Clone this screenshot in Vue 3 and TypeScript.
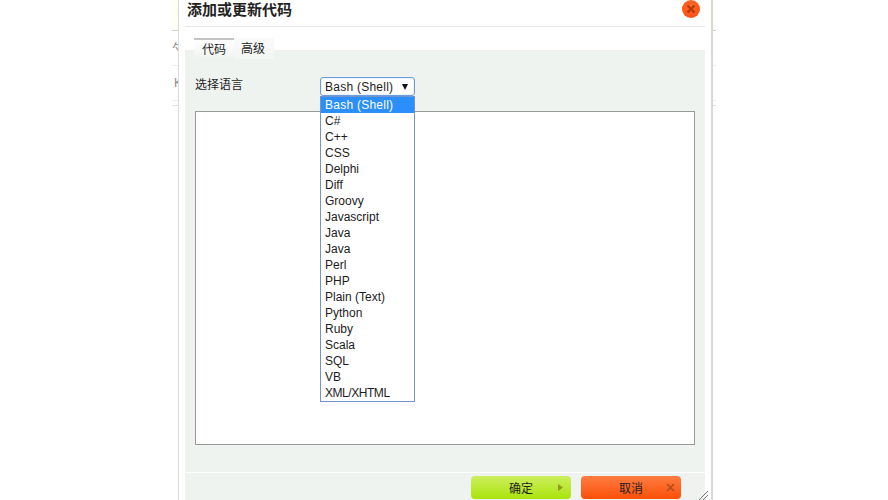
<script setup lang="ts">
const languages: string[] = ['Bash (Shell)','C#','C++','CSS','Delphi','Diff','Groovy','Javascript','Java','Java','Perl','PHP','Plain (Text)','Python','Ruby','Scala','SQL','VB','XML/XHTML']
</script>

<template>
  <div class="page">
    <div class="behind behind-left">
      <i class="tint"></i>
      <i class="rule r30"></i>
      <span class="ghost-a">勺</span>
      <span class="ghost-b">K</span>
      <i class="rule r65"></i>
      <i class="rule r100"></i>
      <i class="rule r105"></i>
    </div>
    <div class="behind behind-right">
      <i class="tint"></i>
      <i class="rule r30"></i>
      <i class="rule r65"></i>
      <i class="rule r100"></i>
      <i class="rule r105"></i>
    </div>
    <div class="dialog">
      <header class="title-bar">
        <h1 class="title">添加或更新代码</h1>
        <button class="close" aria-label="关闭">
          <svg width="10" height="10" viewBox="0 0 10 10"><path d="M1.5 1.5 8.5 8.5M8.5 1.5 1.5 8.5" stroke="#b53a0a" stroke-width="2.4" fill="none"/></svg>
        </button>
      </header>
      <div class="tabs">
        <div class="tab active">代码</div>
        <div class="tab second">高级</div>
      </div>
      <div class="panel">
        <div class="panel-body">
          <div class="lang-row">
            <label class="lang-label">选择语言</label>
            <div class="select-wrap">
              <div class="select">
                <span class="select-text">Bash (Shell)</span>
                <span class="arrow"></span>
              </div>
              <ul class="options">
                <li v-for="(lang, i) in languages" :key="i" :class="{ selected: i === 0 }">{{ lang }}</li>
              </ul>
            </div>
          </div>
          <div class="editor"></div>
        </div>
        <footer class="footer">
          <button class="btn ok">确定
            <svg class="btn-icon play" width="7" height="9" viewBox="0 0 7 9"><path d="M1 1 6 4.5 1 8Z" fill="#8f9a22"/></svg>
          </button>
          <button class="btn cancel">取消
            <svg class="btn-icon cross" width="9" height="9" viewBox="0 0 9 9"><path d="M1 1 8 8M8 1 1 8" stroke="#a8501c" stroke-width="1.6" fill="none"/></svg>
          </button>
        </footer>
        <svg class="grip" width="10" height="10" viewBox="0 0 10 10"><path d="M1 10 10 1M5 10 10 5" stroke="#777" stroke-width="1" fill="none"/></svg>
      </div>
    </div>
  </div>
</template>

<style>
html, body { margin: 0; background: #fff; overflow: hidden; }
</style>

<style scoped>
.page {
  position: relative;
  width: 888px;
  height: 500px;
  overflow: hidden;
  background: #fff;
  font-family: "Liberation Sans", "Noto Sans CJK SC", sans-serif;
  font-size: 12px;
  color: #1c1c1c;
}
.behind { position: absolute; top: 0; height: 210px; width: 6px; overflow: hidden; }
.behind-left { left: 172px; }
.behind-right { left: 713px; width: 3px; }
.tint { position: absolute; left: 0; right: 0; top: 0; height: 30px; background: #fffef5; }
.rule { position: absolute; left: 0; right: 0; height: 1px; background: #dedede; }
.r30 { top: 30px; background: #cfcfcf; }
.r65 { top: 65px; background: #eee; }
.r100 { top: 100px; background: #eee; }
.r105 { top: 105px; }
.ghost-a { position: absolute; left: 0; top: 41px; font-size: 12px; line-height: 16px; color: #8a8a8a; white-space: nowrap; }
.ghost-b { position: absolute; left: 2px; top: 76px; font-size: 12px; line-height: 14px; color: #8a8a8a; }
.dialog {
  position: relative;
  box-sizing: border-box;
  width: 535px;
  height: 500px;
  margin-left: 178px;
  padding: 0 6px 0 6px;
  border-left: 1px solid #dcdcdc;
  border-right: 2px solid #d8d8d8;
  display: flex;
  flex-direction: column;
}
.title-bar {
  height: 26px;
  border-bottom: 1px solid #e8e8e8;
  display: flex;
  justify-content: space-between;
  align-items: flex-start;
  flex: none;
}
.title { margin: 0 0 0 2px; font-size: 15px; line-height: 19px; font-weight: 700; color: #222; }
.close {
  width: 18px;
  height: 18px;
  padding: 0;
  margin: 0 5px 0 0;
  border: 0;
  border-radius: 50%;
  background: radial-gradient(circle at 50% 35%, #ff6a2a, #f94a0a);
  display: flex;
  align-items: center;
  justify-content: center;
}
.tabs {
  display: flex;
  flex: none;
  margin: 11px 0 0 9px;
  height: 12px;
  position: relative;
  z-index: 1;
}
.tab {
  width: 40px;
  height: 21px;
  box-sizing: border-box;
  text-align: center;
  font-size: 12px;
  line-height: 23px;
  color: #222;
  background: linear-gradient(#fafafa, #f3f6f3);
}
.tab.second { padding-right: 2px; }
.tab.active { border-top: 2px solid #c4c4c4; line-height: 21px; background: linear-gradient(#fff, #eff3f0); }
.panel {
  position: relative;
  flex: 1;
  background: #eff3f0;
  display: flex;
  flex-direction: column;
}
.panel-body { flex: 1; padding: 27px 10px 0 10px; }
.lang-row { display: flex; height: 34px; }
.lang-label { width: 125px; line-height: 16px; font-size: 12px; }
.select-wrap { position: relative; width: 95px; }
.select {
  box-sizing: border-box;
  width: 95px;
  height: 19px;
  background: #fff;
  border: 1px solid #6d9bdc;
  border-radius: 3px;
  padding: 0 4px;
  line-height: 18px;
  display: flex;
  justify-content: space-between;
  align-items: center;
  box-shadow: inset 0 0 0 1px #eef3fb;
}
.select-text { letter-spacing: 0.25px; }
.arrow {
  width: 0; height: 0;
  margin-right: 2px;
  border-left: 3.5px solid transparent;
  border-right: 3.5px solid transparent;
  border-top: 6px solid #111;
}
.options {
  position: absolute;
  left: 0;
  top: 19px;
  width: 95px;
  box-sizing: border-box;
  margin: 0;
  padding: 0;
  list-style: none;
  background: #fff;
  border: 1px solid #7293cf;
  z-index: 5;
}
.options li { height: 16px; line-height: 16px; padding-left: 4px; color: #1c1c1c; white-space: nowrap; }
.options li.selected { background: #2a8ffa; color: #fff; letter-spacing: 0.25px; }
.options li:last-child { letter-spacing: -0.45px; }
.editor {
  box-sizing: border-box;
  width: 500px;
  height: 334px;
  background: #fff;
  border: 1px solid #999;
}
.footer {
  flex: none;
  height: 28px;
  border-top: 1px solid #fff;
  display: flex;
  justify-content: flex-end;
  gap: 10px;
  padding: 3px 24px 0 0;
  box-sizing: border-box;
}
.btn {
  position: relative;
  width: 100px;
  height: 23px;
  padding: 0;
  border: 0;
  border-radius: 4px;
  font: inherit;
  font-size: 12px;
  color: #222;
}
.btn.ok { background: linear-gradient(#cdef5e, #a9e30c); }
.btn.cancel { background: linear-gradient(#ff7d42, #fb4f08); }
.btn-icon { position: absolute; top: 7px; }
.btn-icon.play { right: 7px; }
.btn-icon.cross { right: 6px; }
.grip { position: absolute; right: -3px; bottom: 0; }
</style>
